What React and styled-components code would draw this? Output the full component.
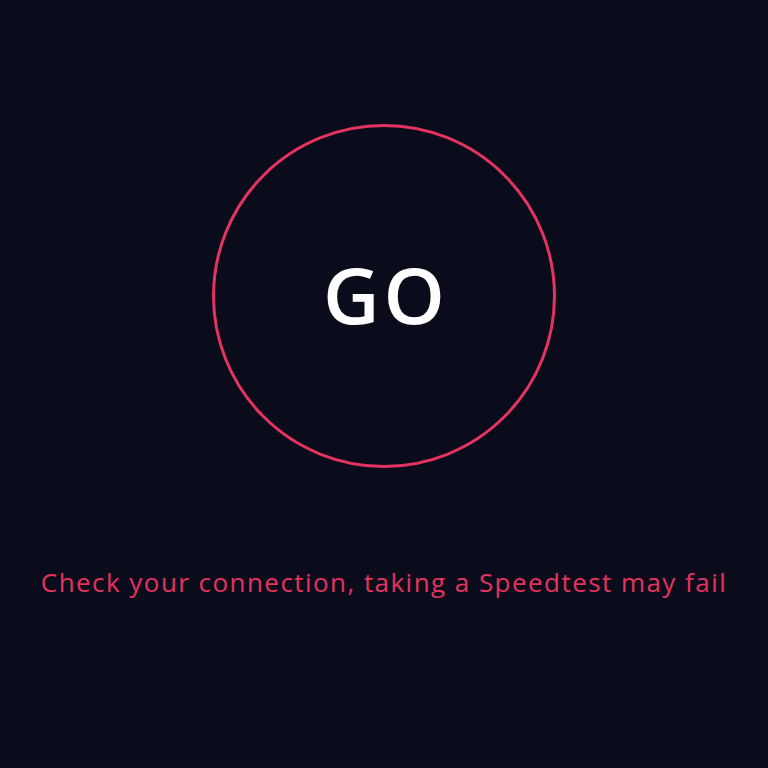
import React from "react";
import styled, { createGlobalStyle } from "styled-components";

const Global = createGlobalStyle`
  html, body { margin: 0; padding: 0; background: #0b0c1b; }
  #root { min-height: 100vh; }
`;

const Page = styled.main`
  height: 768px;
  background: #0b0c1b;
  display: flex;
  flex-direction: column;
  align-items: center;
  padding-top: 124px;
  box-sizing: border-box;
  font-family: "Open Sans", "Noto Sans", sans-serif;
`;

const GoButton = styled.button`
  width: 344px;
  height: 344px;
  border-radius: 50%;
  border: 3px solid #e3335f;
  background: transparent;
  box-sizing: border-box;
  display: flex;
  align-items: center;
  justify-content: center;
  padding: 0 0 4px 4px;
  cursor: pointer;
  color: #ffffff;
  font-family: inherit;
  font-size: 78px;
  font-weight: 600;
  letter-spacing: 4px;
  line-height: 1;
`;

const Warning = styled.p`
  margin: 96px 0 0;
  color: #e3335f;
  font-size: 26px;
  font-weight: 400;
  letter-spacing: 1.45px;
  white-space: nowrap;
`;

export default function App() {
  return (
    <>
      <Global />
      <Page>
        <GoButton>GO</GoButton>
        <Warning>Check your connection, taking a Speedtest may fail</Warning>
      </Page>
    </>
  );
}
